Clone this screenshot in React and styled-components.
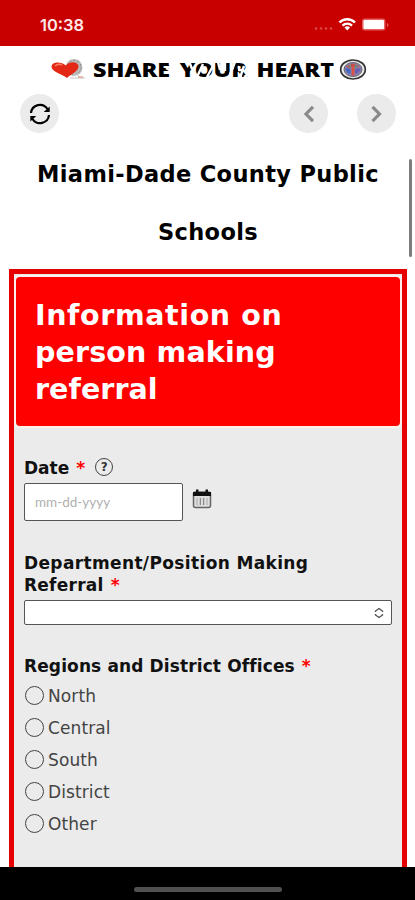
import React from "react";
import styled, { createGlobalStyle } from "styled-components";

const GlobalStyle = createGlobalStyle`
  * {
    box-sizing: border-box;
  }
  body {
    margin: 0;
    font-family: "DejaVu Sans", Verdana, sans-serif;
    background: #fff;
  }
`;

const Screen = styled.div`
  width: 415px;
  height: 900px;
  display: flex;
  flex-direction: column;
  overflow: hidden;
  background: #fff;
`;

const StatusBar = styled.header`
  flex: none;
  height: 46px;
  padding: 3px 25px 0 40px;
  display: flex;
  align-items: center;
  justify-content: space-between;
  background: #c80000;
  color: #fff;
`;

const Clock = styled.span`
  font-family: Inter, sans-serif;
  font-size: 16.5px;
  font-weight: 600;
  color: #ffe9e9;
`;

const Indicators = styled.div`
  display: flex;
  align-items: center;
`;

const Brand = styled.div`
  flex: none;
  height: 46px;
  padding-left: 50px;
  display: flex;
  align-items: center;
`;

const Banner = styled.div`
  position: relative;
  width: 241px;
  margin: 0 5px 0 7px;
`;

const BannerText = styled.div`
  width: 200px;
  padding-top: 1px;
  font-family: "Noto Sans", sans-serif;
  font-size: 20px;
  font-weight: 900;
  line-height: 24px;
  white-space: nowrap;
  word-spacing: 3px;
  color: #000;
  transform: scaleX(1.17);
  transform-origin: left;
`;

// White scratches across the middle of the banner
const Scratches = styled.svg`
  position: absolute;
  left: 70px;
  top: 3px;
`;

const Toolbar = styled.nav`
  flex: none;
  height: 43px;
  padding: 2px 19px 0 20px;
  display: flex;
  gap: 29px;
`;

const RoundButton = styled.button`
  width: 39px;
  height: 39px;
  padding: 0;
  display: flex;
  align-items: center;
  justify-content: center;
  border: none;
  border-radius: 50%;
  background: #ebebeb;
  margin-right: ${({ $push }) => ($push ? "auto" : "0")};
`;

const Content = styled.main`
  position: relative;
  flex: 1;
  min-height: 0;
  padding: 10px 8px 0 9px;
  overflow: hidden;
`;

const ScrollThumb = styled.div`
  position: absolute;
  top: 24px;
  right: 3px;
  width: 3px;
  height: 98px;
  border-radius: 2px;
  background: #7d7d7d;
`;

const PageTitle = styled.h1`
  margin: 0;
  height: 124px;
  font-size: 22.5px;
  font-weight: 700;
  line-height: 58px;
  letter-spacing: 0.35px;
  text-align: center;
  color: #000;
`;

const Panel = styled.section`
  height: 700px;
  border: 5px solid #e60000;
  background: #ebebeb;
  padding: 3px 2px 2px;
`;

const PanelHeading = styled.h2`
  margin: 0;
  height: 149px;
  padding: 20px 19px;
  border-radius: 4px;
  box-shadow: 0 0 0 2px #fff0f0;
  background: #ff0000;
  color: #fff;
  font-size: 28.5px;
  font-weight: 700;
  line-height: 37px;
`;

const HeadingLine = styled.span`
  display: block;
  letter-spacing: ${({ $spacing }) => $spacing};
`;

const Form = styled.form`
  padding: 31px 8px 0 8px;
`;

const Label = styled.div`
  display: flex;
  align-items: center;
  font-size: 17px;
  font-weight: 700;
  line-height: 22px;
  color: #111;
  letter-spacing: ${({ $spacing }) => $spacing || "0"};
`;

const Star = styled.span`
  margin-left: 7px;
  color: #ff0000;
`;

const HelpIcon = styled.span`
  width: 18px;
  height: 18px;
  margin: -2px 0 0 10px;
  display: flex;
  align-items: center;
  justify-content: center;
  border: 1.5px solid #444;
  border-radius: 50%;
  font-size: 12px;
  line-height: 1;
  letter-spacing: 0;
  color: #333;
`;

const DateRow = styled.div`
  display: flex;
  align-items: flex-start;
  gap: 9px;
  margin: 4px 0 31px;
`;

const DateInput = styled.input`
  width: 159px;
  height: 38px;
  padding: 0 10px;
  border: 1.5px solid #555;
  border-radius: 2px;
  background: #fff;
  font-family: Lato, sans-serif;
  font-size: 13.5px;
  &::placeholder {
    color: #b0b0b0;
  }
`;

const SelectBox = styled.div`
  height: 25px;
  margin: 4px 0 30px;
  padding-right: 7px;
  display: flex;
  align-items: center;
  justify-content: flex-end;
  border: 1px solid #555;
  border-radius: 2px;
  background: #fff;
`;

const Options = styled.div`
  padding-top: 7px;
`;

const Option = styled.label`
  height: 32px;
  display: flex;
  align-items: flex-start;
  gap: 4px;
  font-size: 17px;
  line-height: 25px;
  letter-spacing: 0.1px;
  color: #444;
`;

const Radio = styled.input`
  appearance: none;
  width: 19px;
  height: 19px;
  margin: 2px 0 0 1px;
  border: 1.5px solid #444;
  border-radius: 50%;
`;

const CalendarSvg = styled.svg`
  margin-top: 6px;
`;

const HomeBar = styled.footer`
  flex: none;
  height: 33px;
  padding-top: 12px;
  display: flex;
  align-items: center;
  justify-content: center;
  background: #000;
`;

const HomeHandle = styled.div`
  width: 148px;
  height: 5px;
  border-radius: 3px;
  background: #505050;
`;

const regions = ["North", "Central", "South", "District", "Other"];

const StatusIcons = () => (
  <svg width="78" height="20" viewBox="0 0 78 20">
    <g fill="#de4848">
      <circle cx="4" cy="13.5" r="1.3" />
      <circle cx="9" cy="13.5" r="1.3" />
      <circle cx="14" cy="13.5" r="1.3" />
      <circle cx="19" cy="13.5" r="1.3" />
    </g>
    <g fill="none" stroke="#fff" strokeWidth="2.4">
      <path d="M27.5 7.5a11 11 0 0 1 15.5 0" />
      <path d="M30.5 10.6a6.8 6.8 0 0 1 9.5 0" />
    </g>
    <path d="M32.5 12.6a4 4 0 0 1 5.5 0l-2.75 3z" fill="#fff" />
    <rect x="50" y="3.5" width="23.5" height="12" rx="3" fill="#e86060" />
    <rect x="51.5" y="5" width="20.5" height="9" rx="1" fill="#fff" />
    <path d="M75 8v4q1.5-.5 1.5-2t-1.5-2z" fill="#e86060" />
  </svg>
);

const HeartLogo = () => (
  <svg width="36" height="22" viewBox="0 0 36 22">
    <circle cx="24" cy="9.5" r="8.5" fill="#bbb" />
    <circle cx="24" cy="9.5" r="7" fill="none" stroke="#888" strokeDasharray="2 2" />
    <path
      d="M17 20C12 16 1.500 14 1.500 8.500C2 3.500 11 3 16 7.500C19 3 28 3 28.500 8C29 13 21 16 17 20z"
      fill="#e32916"
    />
    <path d="M5 8q3-3 7-1" stroke="#fa8060" strokeWidth="1.5" fill="none" />
    <path d="M22 18l5-2 2 3M20 20h15" stroke="#c4c4c4" fill="none" />
    <path d="M28 19h5" stroke="#dc8070" />
  </svg>
);

const Seal = () => (
  <svg width="28" height="22" viewBox="0 0 28 22">
    <ellipse cx="14" cy="11.5" rx="12.3" ry="9.5" fill="#ececec" stroke="#333" strokeWidth="1.7" />
    <ellipse cx="14" cy="11.5" rx="9" ry="7" fill="#8b82b5" stroke="#666" />
    <path d="M7 8.5l7-3 7 3-3 1-4-1-4 2z" fill="#c6514b" />
    <path d="M6.5 10l5 1v5q-5-1-5-6z" fill="#4468c0" />
    <path d="M16 11l5.5-1q0 5-5.5 6z" fill="#6a5fae" />
    <path d="M9 8.500l3-1.5v3zM16 7l3 1.5-3 2z" fill="#4b9a80" />
    <path d="M12.5 8.500h3v9h-3z" fill="#da5144" />
  </svg>
);

const RefreshIcon = () => (
  <svg width="22" height="22" viewBox="0 0 22 22">
    <g fill="none" stroke="#000" strokeWidth="2.2">
      <path d="M2 10A9 9 0 0 1 18.5 6" />
      <path d="M20 12A9 9 0 0 1 3.5 16" />
    </g>
    <path d="M20.7 3.5V9h-6zM1.3 18.5V13h6z" />
  </svg>
);

const Chevron = ({ next }) => (
  <svg width="20" height="20" viewBox="0 0 20 20">
    <path
      d={next ? "M5.5 2.8l7 7.2-7 7.2" : "M14 2.8L7 10l7 7.2"}
      fill="none"
      stroke="#8a8a8a"
      strokeWidth="3.2"
    />
  </svg>
);

const CalendarIcon = () => (
  <CalendarSvg width="20" height="20" viewBox="0 0 20 20">
    <rect x="1.5" y="3" width="17" height="15.5" rx="2" fill="#ddd" stroke="#666" strokeWidth="1.5" />
    <path d="M1 3h18v4H1zM4 0.5h2.5V4H4zM13.5 0.5H16V4h-2.5z" fill="#111" />
    <path d="M5 9v7M15 9v7" stroke="#aaa" />
    <path d="M8.3 9v7M11.7 9v7" stroke="#777" />
  </CalendarSvg>
);

const SelectArrows = () => (
  <svg width="10" height="12" viewBox="0 0 10 12">
    <path
      d="M1.5 5V4L5 1.500 8.5 4v1M1.5 7v1L5 10.500 8.5 8V7"
      fill="none"
      stroke="#555"
      strokeWidth="1.4"
    />
  </svg>
);

const App = () => {
  return (
    <>
      <GlobalStyle />
      <Screen>
        <StatusBar>
          <Clock>10:38</Clock>
          <Indicators>
            <StatusIcons />
          </Indicators>
        </StatusBar>
        <Brand>
          <HeartLogo />
          <Banner>
            <BannerText>SHARE YOUR HEART</BannerText>
            <Scratches width="90" height="20" viewBox="0 0 90 20">
              <path
                d="M7 1v4M3 8l7 4M8 14v4M26 1l3 8M34 17l6-13M44 17l7-13M55 2l2 8M62 2v9M67 15l5-13M75 10h6M81 6l-4 12M86 14l-5 3"
                fill="none"
                stroke="#fff"
                strokeWidth="2.4"
              />
            </Scratches>
          </Banner>
          <Seal />
        </Brand>
        <Toolbar>
          <RoundButton $push aria-label="Refresh">
            <RefreshIcon />
          </RoundButton>
          <RoundButton aria-label="Back">
            <Chevron />
          </RoundButton>
          <RoundButton aria-label="Forward">
            <Chevron next />
          </RoundButton>
        </Toolbar>
        <Content>
          <ScrollThumb />
          <PageTitle>
            Miami-Dade County Public
            <br />
            Schools
          </PageTitle>
          <Panel>
            <PanelHeading>
              <HeadingLine $spacing="0.6px">Information on</HeadingLine>
              <HeadingLine $spacing="0.15px">person making</HeadingLine>
              <HeadingLine $spacing="0.05px">referral</HeadingLine>
            </PanelHeading>
            <Form>
              <Label>
                Date<Star>*</Star>
                <HelpIcon>?</HelpIcon>
              </Label>
              <DateRow>
                <DateInput placeholder="mm-dd-yyyy" />
                <CalendarIcon />
              </DateRow>
              <Label $spacing="0.36px">Department/Position Making</Label>
              <Label $spacing="0.25px">
                Referral<Star>*</Star>
              </Label>
              <SelectBox>
                <SelectArrows />
              </SelectBox>
              <Label $spacing="0.12px">
                Regions and District Offices<Star>*</Star>
              </Label>
              <Options>
                {regions.map((region) => (
                  <Option key={region}>
                    <Radio type="radio" name="region" />
                    {region}
                  </Option>
                ))}
              </Options>
            </Form>
          </Panel>
        </Content>
        <HomeBar>
          <HomeHandle />
        </HomeBar>
      </Screen>
    </>
  );
};

export default App;
